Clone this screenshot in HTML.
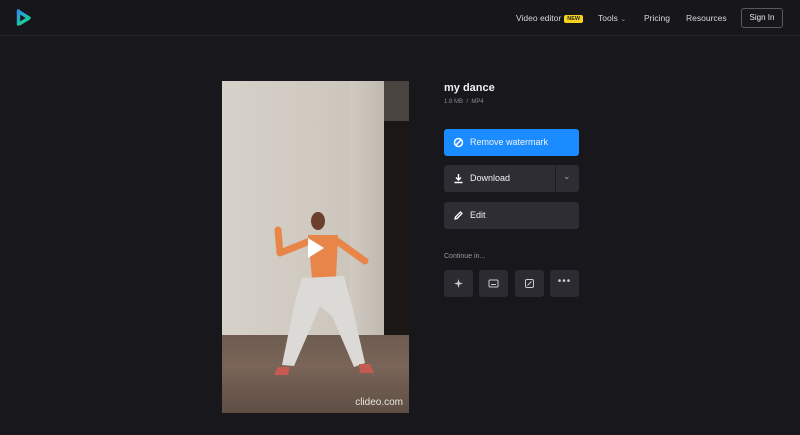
<!DOCTYPE html>
<html><head><meta charset="utf-8"><style>
*{margin:0;padding:0;box-sizing:border-box}
body{width:800px;height:435px;background:#18171c;font-family:"Liberation Sans",sans-serif;position:relative;overflow:hidden;color:#fff}
.hdr{position:absolute;left:0;top:0;width:800px;height:36px;border-bottom:1px solid #26252b;background:#17161b}
.nav{position:absolute;top:13px;font-size:8.5px;color:#d8d8dc}
.new{display:inline-block;background:#f7d21c;color:#222;font-size:5.5px;font-weight:bold;padding:1px 3px;border-radius:2px;vertical-align:1px;margin-left:3px}
.sign{position:absolute;left:741px;top:8px;width:42px;height:20px;border:1px solid #5a5960;border-radius:3px;font-size:8px;text-align:center;line-height:18px;color:#e8e8ea}
.btn{position:absolute;left:444px;width:135px;height:27px;border-radius:3px;font-size:9px;line-height:27px;padding-left:26px;color:#f2f2f4}
.sq{position:absolute;top:270px;width:29px;height:27px;background:#2c2b31;border-radius:3px}
</style></head><body>
<div class="hdr">
<svg style="position:absolute;left:16px;top:9px" width="17" height="18" viewBox="0 0 17 18"><defs><linearGradient id="g" x1="0" y1="0" x2="0.6" y2="1"><stop offset="0" stop-color="#2e8ff0"/><stop offset="1" stop-color="#19d08f"/></linearGradient></defs><path d="M2.5 2 L2.5 15 M2.5 2.5 L13 9 L4 14.5" fill="none" stroke="url(#g)" stroke-width="3.4" stroke-linejoin="round" stroke-linecap="round"/></svg>
<div class="nav" style="left:516px">Video editor<span class="new">NEW</span></div>
<div class="nav" style="left:598px">Tools <span style="font-size:7px;color:#999">&#8964;</span></div>
<div class="nav" style="left:644px">Pricing</div>
<div class="nav" style="left:686px">Resources</div>
<div class="sign">Sign In</div>
</div>
<div style="position:absolute;left:222px;top:81px;width:187px;height:332px;overflow:hidden;background:#1a1715">
<div style="position:absolute;left:0;top:0;width:162px;height:254px;background:linear-gradient(90deg,#d6d1c9,#cfc9c0 60%,#c6c0b7)"></div>
<div style="position:absolute;left:128px;top:0;width:34px;height:254px;background:linear-gradient(90deg,#d0cac1,#bfb9b0)"></div>
<div style="position:absolute;left:162px;top:0;width:25px;height:40px;background:#4a4440"></div>
<div style="position:absolute;left:0;top:254px;width:187px;height:78px;background:linear-gradient(180deg,#6e5c50,#7a6558 40%,#5e4e44)"></div>
<svg style="position:absolute;left:0;top:0" width="187" height="332">
<path d="M56 149 L58 172 L88 160 M115 160 L143 180" stroke="#e8864a" stroke-width="7" fill="none" stroke-linecap="round" stroke-linejoin="round"/>
<path d="M86 154 L116 154 L114 197 L90 197Z" fill="#e8864a"/>
<ellipse cx="96" cy="140" rx="7" ry="9" fill="#6a3f2c"/>
<path d="M80 197 L122 195 L130 225 L143 282 L132 286 L110 235 L98 225 L72 285 L60 284 L72 225Z" fill="#dcdad6"/>
<path d="M56 286 L68 286 L66 294 L52 294Z M137 283 L148 283 L152 292 L138 292Z" fill="#c55a50"/>
</svg>
<svg style="position:absolute;left:84px;top:155px" width="20" height="24"><path d="M2 2 L18 12 L2 22Z" fill="#fff"/></svg>
<div style="position:absolute;right:6px;bottom:5px;font-size:10px;color:#e8e4e0">clideo.com</div>
</div>
<div style="position:absolute;left:444px;top:82px;font-size:11px;font-weight:bold;color:#f0f0f2">my dance</div>
<div style="position:absolute;left:444px;top:99px;font-size:6px;color:#8a8990">1.8 MB &nbsp;/ &nbsp;MP4</div>
<div class="btn" style="top:129px;background:#1a8cff">
<svg style="position:absolute;left:9px;top:8px" width="11" height="11" viewBox="0 0 11 11"><circle cx="5.5" cy="5.5" r="4" fill="none" stroke="#fff" stroke-width="1.5"/><path d="M3 8 L8 3" stroke="#fff" stroke-width="1.5"/></svg>Remove watermark</div>
<div class="btn" style="top:165px;background:#2e2d33">
<svg style="position:absolute;left:9px;top:8px" width="11" height="11" viewBox="0 0 11 11"><path d="M5.5 1 V7 M3 4.5 L5.5 7 L8 4.5 M1.5 9.5 H9.5" stroke="#fff" stroke-width="1.4" fill="none"/></svg>Download
<div style="position:absolute;left:111px;top:0;width:1px;height:27px;background:#1e1d22"></div>
<span style="position:absolute;left:119px;top:-2px;color:#aaa;font-size:9px">&#8964;</span></div>
<div class="btn" style="top:202px;background:#2e2d33">
<svg style="position:absolute;left:9px;top:8px" width="11" height="11" viewBox="0 0 11 11"><path d="M2 9 L2.5 7 L7.5 2 L9 3.5 L4 8.5Z" stroke="#fff" stroke-width="1.3" fill="none"/></svg>Edit</div>
<div style="position:absolute;left:444px;top:253px;font-size:7px;color:#9a99a0">Continue in...</div>
<div class="sq" style="left:444px"><svg style="position:absolute;left:9px;top:8px" width="11" height="11"><path d="M5.5 1 L6.5 4.5 L10 5.5 L6.5 6.5 L5.5 10 L4.5 6.5 L1 5.5 L4.5 4.5Z" fill="#ccc"/></svg></div>
<div class="sq" style="left:479px"><svg style="position:absolute;left:9px;top:8px" width="11" height="11"><rect x="1" y="2" width="9" height="7" rx="1" fill="none" stroke="#ccc"/><path d="M3 6.5 H8" stroke="#ccc"/></svg></div>
<div class="sq" style="left:515px"><svg style="position:absolute;left:9px;top:8px" width="11" height="11"><rect x="1.5" y="1.5" width="8" height="8" rx="1.5" fill="none" stroke="#ccc"/><path d="M3.5 7.5 L7.5 3.5" stroke="#ccc"/></svg></div>
<div class="sq" style="left:550px;color:#ccc;font-size:10px;text-align:center;line-height:24px;letter-spacing:1px">•••</div>
</body></html>
